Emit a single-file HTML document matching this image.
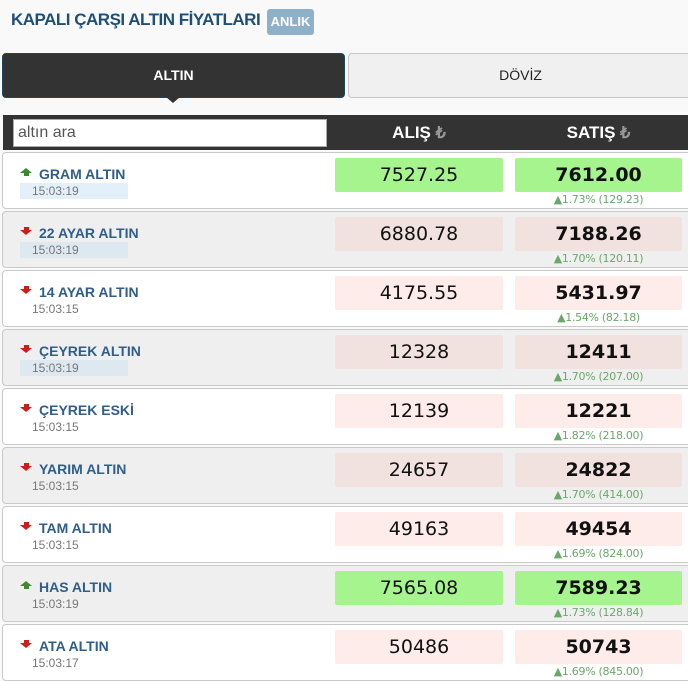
<!DOCTYPE html>
<html><head><meta charset="utf-8"><style>
*{box-sizing:border-box;margin:0;padding:0}
body{width:688px;height:680px;overflow:hidden;background:#f9f9f9;font-family:"Liberation Sans",sans-serif;position:relative}
.a{position:absolute}
.title{left:11px;top:10px;font-size:17px;font-weight:bold;color:#1d4f78;letter-spacing:-0.5px}
.badge{left:267px;top:9px;width:47px;height:26px;background:#8fb0c9;color:#fff;font-size:13px;font-weight:bold;border-radius:3px;text-align:center;line-height:26px}
.tab1{left:2px;top:53px;width:343px;height:45px;background:#333;border:1px solid #1d4660;border-radius:4px;color:#fff;font-weight:bold;font-size:14px;text-align:center;line-height:43px}
.tri{left:166px;top:97px;width:0;height:0;border-left:7px solid transparent;border-right:7px solid transparent;border-top:6px solid #333}
.tab2{left:348px;top:53px;width:345px;height:45px;background:#f0f0f0;border:1px solid #c8c8c8;border-radius:4px;color:#222;font-size:14px;text-align:center;line-height:43px}
.hdr{left:3px;top:115px;width:690px;height:35px;background:#333}
.inp{left:13px;top:119px;width:314px;height:28px;background:#fff;border:1px solid #aaa;font-size:16px;color:#555;padding:4px 4px;line-height:18px}
.h{top:115px;height:35px;line-height:35px;color:#fff;font-weight:bold;font-size:17px;text-align:center}
.h span{color:#999;font-size:16px}
.row{left:2px;width:692px;height:57px;border:1px solid #c9c9c9;border-radius:4px}
.nm{left:39px;font-size:14px;font-weight:bold;color:#2f5d8c}
.tm{left:20px;width:108px;height:16px;font-size:12px;color:#777;padding-left:12px;line-height:16px}
.box{height:34px;border-radius:2px;text-align:center;line-height:34px;font-size:19px;color:#111;font-family:"DejaVu Sans",sans-serif}
.b1{left:335px;width:168px}
.b2{left:515px;width:167px;font-weight:bold}
.ch{left:515px;width:167px;text-align:center;font-size:11px;color:#6aa86a;font-family:"DejaVu Sans",sans-serif;letter-spacing:-0.3px}
.up{left:20px;width:0;height:0;border-left:6px solid transparent;border-right:6px solid transparent;border-bottom:5px solid #3b8a2a}
.upb{width:5px;height:3px;background:#3b8a2a}
.dn{left:20px;width:0;height:0;border-left:6px solid transparent;border-right:6px solid transparent;border-top:5px solid #d01b1b}
.dnb{width:5px;height:3px;background:#d01b1b}
</style></head><body>
<div class="a title">KAPALI ÇARŞI ALTIN FİYATLARI</div>
<div class="a badge">ANLIK</div>
<div class="a tab1">ALTIN</div><div class="a tri"></div>
<div class="a tab2">DÖVİZ</div>
<div class="a hdr"></div>
<div class="a inp">altın ara</div>
<div class="a h" style="left:335px;width:168px">ALIŞ <span>₺</span></div>
<div class="a h" style="left:515px;width:167px">SATIŞ <span>₺</span></div>

<div class="a row" style="top:152px;background:#fff"></div>
<div class="a up" style="top:168px"></div><div class="a upb" style="left:23.5px;top:173px"></div>
<div class="a nm" style="top:166px">GRAM ALTIN</div>
<div class="a tm" style="top:183px;background:#e3f0fa">15:03:19</div>
<div class="a box b1" style="top:158px;background:#a6f48e">7527.25</div>
<div class="a box b2" style="top:158px;background:#a6f48e">7612.00</div>
<div class="a ch" style="top:193px">▲1.73% (129.23)</div>

<div class="a row" style="top:211px;background:#efefef"></div>
<div class="a dnb" style="left:23.5px;top:227px"></div><div class="a dn" style="top:230px"></div>
<div class="a nm" style="top:225px">22 AYAR ALTIN</div>
<div class="a tm" style="top:242px;background:#dde8f0">15:03:19</div>
<div class="a box b1" style="top:217px;background:#f2e2df">6880.78</div>
<div class="a box b2" style="top:217px;background:#f2e2df">7188.26</div>
<div class="a ch" style="top:252px">▲1.70% (120.11)</div>

<div class="a row" style="top:270px;background:#fff"></div>
<div class="a dnb" style="left:23.5px;top:286px"></div><div class="a dn" style="top:289px"></div>
<div class="a nm" style="top:284px">14 AYAR ALTIN</div>
<div class="a tm" style="top:301px">15:03:15</div>
<div class="a box b1" style="top:276px;background:#fdecea">4175.55</div>
<div class="a box b2" style="top:276px;background:#fdecea">5431.97</div>
<div class="a ch" style="top:311px">▲1.54% (82.18)</div>

<div class="a row" style="top:329px;background:#efefef"></div>
<div class="a dnb" style="left:23.5px;top:345px"></div><div class="a dn" style="top:348px"></div>
<div class="a nm" style="top:343px">ÇEYREK ALTIN</div>
<div class="a tm" style="top:360px;background:#dde8f0">15:03:19</div>
<div class="a box b1" style="top:335px;background:#f2e2df">12328</div>
<div class="a box b2" style="top:335px;background:#f2e2df">12411</div>
<div class="a ch" style="top:370px">▲1.70% (207.00)</div>

<div class="a row" style="top:388px;background:#fff"></div>
<div class="a dnb" style="left:23.5px;top:404px"></div><div class="a dn" style="top:407px"></div>
<div class="a nm" style="top:402px">ÇEYREK ESKİ</div>
<div class="a tm" style="top:419px">15:03:15</div>
<div class="a box b1" style="top:394px;background:#fdecea">12139</div>
<div class="a box b2" style="top:394px;background:#fdecea">12221</div>
<div class="a ch" style="top:429px">▲1.82% (218.00)</div>

<div class="a row" style="top:447px;background:#efefef"></div>
<div class="a dnb" style="left:23.5px;top:463px"></div><div class="a dn" style="top:466px"></div>
<div class="a nm" style="top:461px">YARIM ALTIN</div>
<div class="a tm" style="top:478px">15:03:15</div>
<div class="a box b1" style="top:453px;background:#f2e2df">24657</div>
<div class="a box b2" style="top:453px;background:#f2e2df">24822</div>
<div class="a ch" style="top:488px">▲1.70% (414.00)</div>

<div class="a row" style="top:506px;background:#fff"></div>
<div class="a dnb" style="left:23.5px;top:522px"></div><div class="a dn" style="top:525px"></div>
<div class="a nm" style="top:520px">TAM ALTIN</div>
<div class="a tm" style="top:537px">15:03:15</div>
<div class="a box b1" style="top:512px;background:#fdecea">49163</div>
<div class="a box b2" style="top:512px;background:#fdecea">49454</div>
<div class="a ch" style="top:547px">▲1.69% (824.00)</div>

<div class="a row" style="top:565px;background:#efefef"></div>
<div class="a up" style="top:581px"></div><div class="a upb" style="left:23.5px;top:586px"></div>
<div class="a nm" style="top:579px">HAS ALTIN</div>
<div class="a tm" style="top:596px">15:03:19</div>
<div class="a box b1" style="top:571px;background:#a6f48e">7565.08</div>
<div class="a box b2" style="top:571px;background:#a6f48e">7589.23</div>
<div class="a ch" style="top:606px">▲1.73% (128.84)</div>

<div class="a row" style="top:624px;background:#fff"></div>
<div class="a dnb" style="left:23.5px;top:640px"></div><div class="a dn" style="top:643px"></div>
<div class="a nm" style="top:638px">ATA ALTIN</div>
<div class="a tm" style="top:655px">15:03:17</div>
<div class="a box b1" style="top:630px;background:#fdecea">50486</div>
<div class="a box b2" style="top:630px;background:#fdecea">50743</div>
<div class="a ch" style="top:665px">▲1.69% (845.00)</div>
</body></html>
